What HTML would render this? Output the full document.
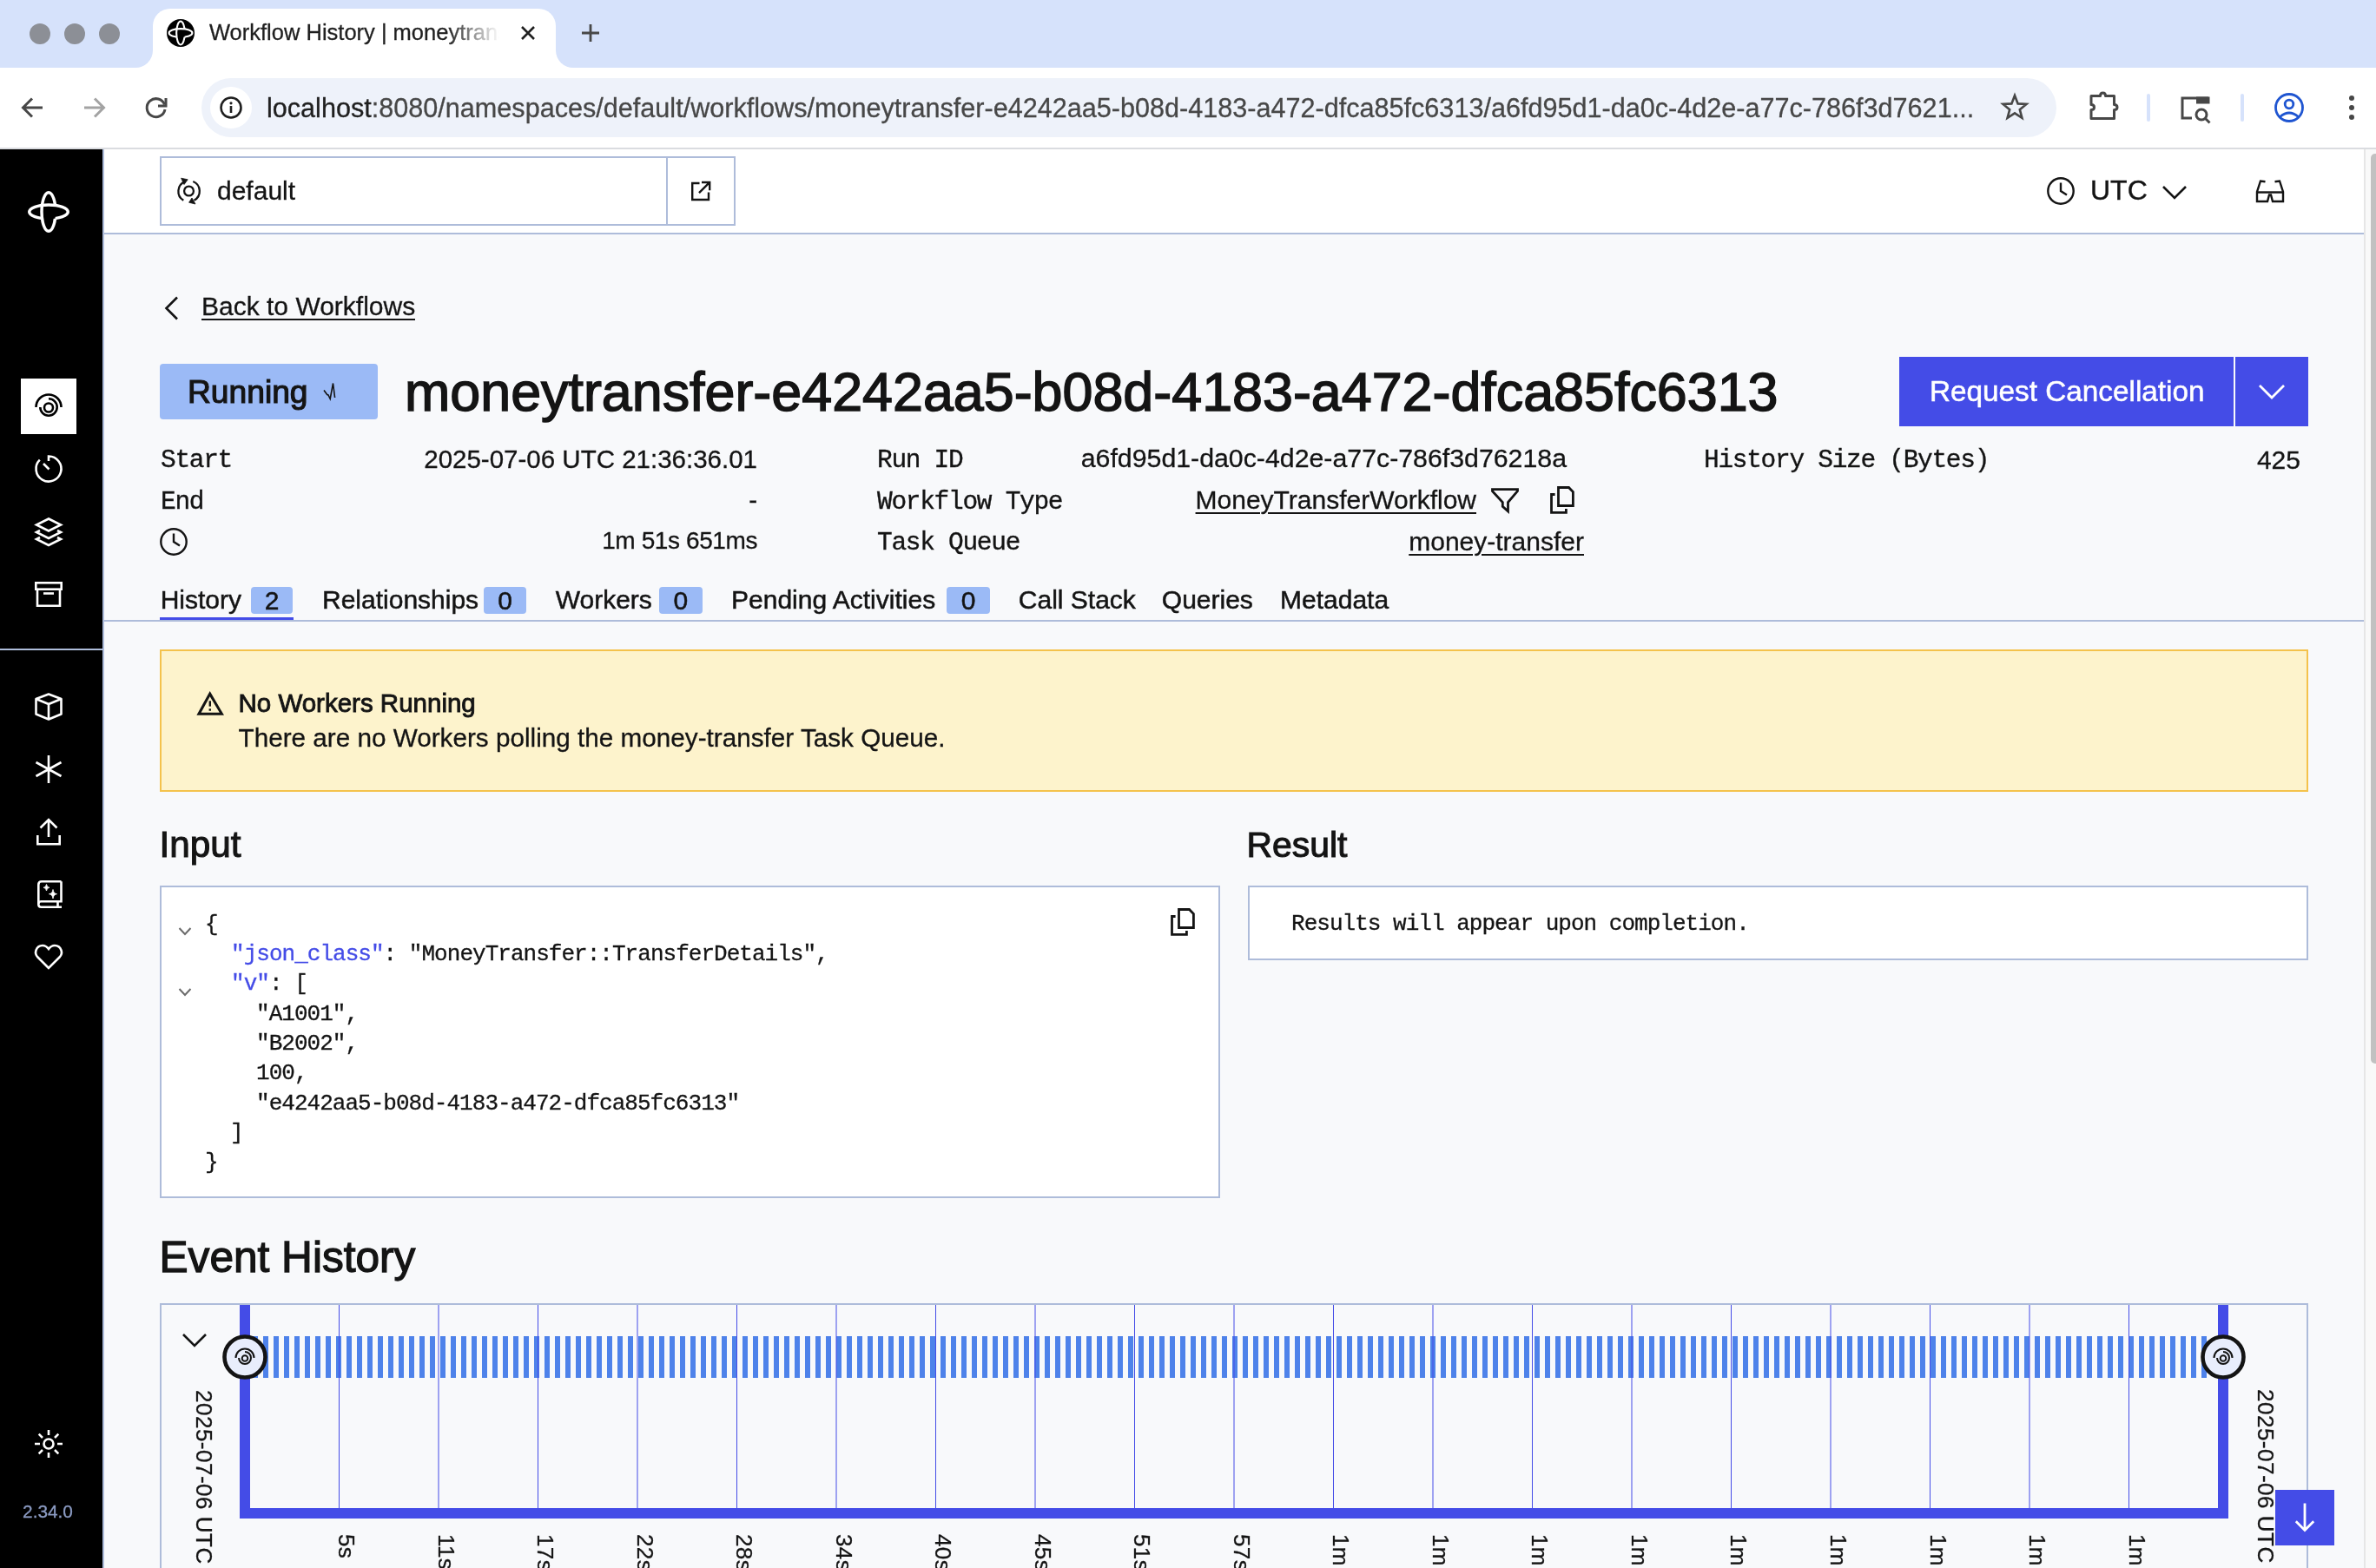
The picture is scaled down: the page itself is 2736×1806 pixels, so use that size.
<!DOCTYPE html>
<html><head><meta charset="utf-8"><title>Workflow History</title>
<style>
*{box-sizing:border-box;margin:0;padding:0}
html,body{width:2736px;height:1806px;overflow:hidden;background:#f8f9fb;font-family:"Liberation Sans",sans-serif;color:#141414}
.a{position:absolute}
svg{position:absolute;overflow:visible}
.mono{font-family:"Liberation Mono",monospace}
/* chrome */
#tabstrip{left:0;top:0;width:2736px;height:78px;background:#d6e2fb}
#toolbar{left:0;top:78px;width:2736px;height:93px;background:#fff}
#tbborder{left:0;top:170px;width:2736px;height:2px;background:#dadce0}
.tl{width:24px;height:24px;border-radius:50%;background:#8c8f96;top:27px}
#tab{left:176px;top:10px;width:464px;height:68px;background:#fff;border-radius:20px 20px 0 0}
#omni{left:232px;top:90px;width:2136px;height:68px;border-radius:34px;background:#eef2fa}
#url{left:307px;top:107px;font-size:30.6px;white-space:nowrap;color:#474747;line-height:34px}
#url b{font-weight:normal;color:#1f1f1f}
/* app */
#sidebar{left:0;top:172px;width:118px;height:1634px;background:#000}
#sbborder{left:118px;top:172px;width:2px;height:1634px;background:#aebcda}
#header{left:120px;top:172px;width:2602px;height:96px;background:#fff}
#hdrborder{left:120px;top:268px;width:2602px;height:2px;background:#aebcda}
#scroll{left:2722px;top:172px;width:14px;height:1634px;background:#f9f9f9;border-left:2px solid #e6e6e6}
#thumb{left:2730px;top:177px;width:10px;height:1048px;background:#c1c1c1;border-radius:6px}
body{will-change:transform;-webkit-text-stroke-width:0.3px}
.nb{-webkit-text-stroke-width:0}
</style></head>
<body>
<!-- ===== Browser chrome ===== -->
<div id="tabstrip" class="a"></div>
<div class="a tl" style="left:34px"></div>
<div class="a tl" style="left:74px"></div>
<div class="a tl" style="left:114px"></div>
<div class="a" style="left:156px;top:58px;width:20px;height:20px;background:#fff;overflow:hidden"><div class="a" style="left:-20px;top:-20px;width:40px;height:40px;border-radius:50%;background:#d6e2fb"></div></div>
<div class="a" style="left:640px;top:58px;width:20px;height:20px;background:#fff;overflow:hidden"><div class="a" style="left:0px;top:-20px;width:40px;height:40px;border-radius:50%;background:#d6e2fb"></div></div>
<div id="tab" class="a"></div>
<div id="toolbar" class="a"></div>
<div id="tbborder" class="a"></div>
<div id="omni" class="a"></div>

<!-- favicon -->
<svg width="0" height="0" style="left:0;top:0"><defs>
<mask id="mv" maskUnits="userSpaceOnUse" x="-5" y="-5" width="58" height="58"><rect x="-5" y="-5" width="58" height="58" fill="#fff"/><path d="M24,16 A22.25,8 0 0 1 24,32 Z" fill="#000"/></mask>
<mask id="mh" maskUnits="userSpaceOnUse" x="-5" y="-5" width="58" height="58"><rect x="-5" y="-5" width="58" height="58" fill="#fff"/><path d="M16,24 A8,22.25 0 0 0 32,24 Z" fill="#000"/></mask>
<symbol id="logo" viewBox="0 0 48 48" overflow="visible"><g fill="none" stroke="currentColor" stroke-width="3.5">
<ellipse cx="24" cy="24" rx="8" ry="22.25" mask="url(#mv)"/><ellipse cx="24" cy="24" rx="22.25" ry="8" mask="url(#mh)"/></g></symbol>
</defs></svg>
<svg style="left:192px;top:22px" width="32" height="32" viewBox="0 0 32 32"><circle cx="16" cy="16" r="16" fill="#000"/>
<use href="#logo" x="1.5" y="1.5" width="29" height="29" style="color:#fff" /></svg>
<div class="a" style="left:241px;top:22px;font-size:25.5px;line-height:30px;white-space:nowrap;color:#1f1f1f;width:334px;overflow:hidden;-webkit-mask-image:linear-gradient(90deg,#000 82%,transparent 100%)">Workflow History | moneytransfer</div>
<svg style="left:600px;top:30px" width="16" height="16" viewBox="0 0 16 16"><path d="M1 1L15 15M15 1L1 15" stroke="#1f1f1f" stroke-width="2.6"/></svg>
<svg style="left:669px;top:27px" width="22" height="22" viewBox="0 0 22 22"><path d="M11 1V21M1 11H21" stroke="#474747" stroke-width="2.8"/></svg>
<!-- nav -->
<svg style="left:24px;top:112px" width="26" height="24" viewBox="0 0 26 24"><path d="M25 12H3M13 1.5L2.5 12L13 22.5" fill="none" stroke="#474747" stroke-width="3"/></svg>
<svg style="left:96px;top:112px" width="26" height="24" viewBox="0 0 26 24"><path d="M1 12H23M13 1.5L23.5 12L13 22.5" fill="none" stroke="#a3a3a3" stroke-width="3"/></svg>
<svg style="left:167px;top:111px" width="26" height="26" viewBox="0 0 26 26"><path d="M22.5 9.5A10.5 10.5 0 1 0 23 15" fill="none" stroke="#474747" stroke-width="3"/><path d="M24 2V11H15" fill="none" stroke="#474747" stroke-width="3"/></svg>
<div class="a" style="left:242px;top:100px;width:48px;height:48px;border-radius:50%;background:#fff"></div>
<svg style="left:253px;top:111px" width="26" height="26" viewBox="0 0 26 26"><circle cx="13" cy="13" r="11.5" fill="none" stroke="#1f1f1f" stroke-width="2.6"/><rect x="11.7" y="11" width="2.6" height="8" fill="#1f1f1f"/><circle cx="13" cy="7.8" r="1.6" fill="#1f1f1f"/></svg>
<svg style="left:2304px;top:107px" width="32" height="32" viewBox="0 0 32 32"><path d="M16 3L19.6 12.4L29.5 12.9L21.8 19.2L24.4 28.8L16 23.4L7.6 28.8L10.2 19.2L2.5 12.9L12.4 12.4Z" fill="none" stroke="#474747" stroke-width="2.6" stroke-linejoin="miter"/></svg>
<svg style="left:2405px;top:105px" width="36" height="34" viewBox="0 0 36 34"><path d="M3 5.5H13.5Q13.5 2 16.5 2Q19.5 2 19.5 5.5H29.5V15.5Q33 15.5 33 18.5Q33 21.5 29.5 21.5V31.5H3V21.5Q6.5 21.5 6.5 18.5Q6.5 15.5 3 15.5Z" fill="none" stroke="#474747" stroke-width="3" stroke-linejoin="round"/></svg>
<div class="a" style="left:2472px;top:108px;width:4px;height:32px;border-radius:2px;background:#d6e2fb"></div>
<div class="a" style="left:2580px;top:108px;width:4px;height:32px;border-radius:2px;background:#d6e2fb"></div>
<svg style="left:2510px;top:110px" width="38" height="32" viewBox="0 0 38 32"><path d="M14 26H3V3H33" fill="none" stroke="#474747" stroke-width="3"/><rect x="19" y="1.5" width="15.5" height="8" fill="#474747"/><circle cx="25" cy="22" r="6" fill="none" stroke="#474747" stroke-width="3"/><path d="M29.5 26.5L34.5 31.5" stroke="#474747" stroke-width="3"/></svg>
<svg style="left:2618px;top:106px" width="36" height="36" viewBox="0 0 36 36"><circle cx="18" cy="18" r="15.5" fill="none" stroke="#1f55d1" stroke-width="2.8"/><circle cx="18" cy="14" r="4.8" fill="none" stroke="#1f55d1" stroke-width="2.8"/><path d="M7.5 28.5Q18 19.5 28.5 28.5" fill="none" stroke="#1f55d1" stroke-width="2.8"/></svg>
<svg style="left:2702px;top:108px" width="12" height="32" viewBox="0 0 12 32"><circle cx="6" cy="5" r="3" fill="#474747"/><circle cx="6" cy="16" r="3" fill="#474747"/><circle cx="6" cy="27" r="3" fill="#474747"/></svg>
<div id="url" class="a"><b>localhost</b>:8080/namespaces/default/workflows/moneytransfer-e4242aa5-b08d-4183-a472-dfca85fc6313/a6fd95d1-da0c-4d2e-a77c-786f3d7621...</div>

<!-- ===== App ===== -->
<div id="sidebar" class="a"></div>
<div id="sbborder" class="a"></div>

<!-- sidebar icons -->
<svg style="left:32px;top:220px" width="48" height="48" viewBox="0 0 48 48"><use href="#logo" x="0" y="0" width="48" height="48" style="color:#fff"/></svg>
<div class="a" style="left:24px;top:436px;width:64px;height:64px;background:#fff"></div>
<svg style="left:40px;top:453px" width="32" height="32" viewBox="0 0 32 32" fill="none" stroke="#000" stroke-width="2.6">
<path d="M1.5 16A14.5 14.5 0 0 1 30.5 16"/><path d="M16 6.3A9.7 9.7 0 1 1 6.3 16"/><circle cx="16" cy="16.5" r="5"/></svg>
<svg style="left:40px;top:524px" width="32" height="32" viewBox="0 0 32 32" fill="none" stroke="#fff" stroke-width="2.6">
<path d="M16 7V1.5A14.5 14.5 0 1 1 5.8 5.7"/><path d="M10 10L16.5 16.5"/></svg>
<svg style="left:40px;top:596px" width="32" height="32" viewBox="0 0 32 32" fill="none" stroke="#fff" stroke-width="2.6" stroke-linejoin="miter">
<path d="M16 1.5L30 8.5L16 15.5L2 8.5Z"/><path d="M6 15L2 17L16 24L30 17L26 15"/><path d="M6 23L2 25L16 32L30 25L26 23"/></svg>
<svg style="left:40px;top:668px" width="32" height="32" viewBox="0 0 32 32" fill="none" stroke="#fff" stroke-width="2.6">
<rect x="1.3" y="3.3" width="29.4" height="7.4"/><path d="M3 10.7V29.7H29V10.7"/><path d="M10 15.5H22"/></svg>
<div class="a" style="left:0;top:747px;width:118px;height:2px;background:#aebcda"></div>
<svg style="left:40px;top:798px" width="32" height="32" viewBox="0 0 32 32" fill="none" stroke="#fff" stroke-width="2.6" stroke-linejoin="round">
<path d="M16 1.5L30.5 7V24.5L16 30.5L1.5 24.5V7Z"/><path d="M1.5 7L16 13L30.5 7M16 13V30.5"/></svg>
<svg style="left:40px;top:870px" width="32" height="32" viewBox="0 0 32 32" fill="none" stroke="#fff" stroke-width="2.6">
<path d="M16 0V32M1.5 8L30.5 24M1.5 24L30.5 8"/></svg>
<svg style="left:40px;top:942px" width="32" height="32" viewBox="0 0 32 32" fill="none" stroke="#fff" stroke-width="2.6">
<path d="M16 22V2M6.5 11.5L16 2L25.5 11.5"/><path d="M3.3 20V30.3H28.7V20"/></svg>
<svg style="left:40px;top:1014px" width="32" height="32" viewBox="0 0 32 32" fill="none" stroke="#fff" stroke-width="2.6">
<path d="M30.5 1.3H8Q4.3 1.3 4.3 5V27.5Q4.3 30.7 7.5 30.7H31"/><path d="M4.3 27Q4.3 24.3 7.5 24.3H30.5V1.3M26.5 24.3V30.7"/>
<path d="M13.5 4.5Q14 8 17 8.3Q14 8.6 13.5 12Q13 8.6 10 8.3Q13 8 13.5 4.5Z" fill="#fff" stroke-width="0.8"/>
<path d="M21 10.5Q21.6 15.2 25.5 15.7Q21.6 16.2 21 21Q20.4 16.2 16.5 15.7Q20.4 15.2 21 10.5Z" fill="#fff" stroke-width="0.8"/></svg>
<svg style="left:40px;top:1086px" width="32" height="32" viewBox="0 0 32 32" fill="none" stroke="#fff" stroke-width="2.6" stroke-linejoin="miter">
<path d="M16 29L3.5 16.5Q0 13 1.5 8.5Q3.5 3 9 3Q13 3 16 7Q19 3 23 3Q28.5 3 30.5 8.5Q32 13 28.5 16.5Z"/></svg>
<svg style="left:40px;top:1647px" width="32" height="32" viewBox="0 0 32 32" fill="none" stroke="#fff" stroke-width="2.6">
<circle cx="16" cy="16" r="5.5"/><path d="M16 0V6M16 26V32M0 16H6M26 16H32M4.7 4.7L9 9M23 23L27.3 27.3M4.7 27.3L9 23M23 9L27.3 4.7"/></svg>
<div class="a" style="left:-4px;top:1728.5px;width:118px;text-align:center;font-size:20.8px;line-height:24px;color:#8b9bc3">2.34.0</div>
<div id="header" class="a"></div>
<div id="hdrborder" class="a"></div>

<!-- header -->
<div class="a" style="left:184px;top:180px;width:663px;height:80px;border:2px solid #aebcda;background:#fff"></div>
<div class="a" style="left:767px;top:180px;width:2px;height:80px;background:#aebcda"></div>
<svg style="left:200px;top:202px" width="36" height="36" viewBox="0 0 36 36" fill="none" stroke="#141414" stroke-width="2.3">
<circle cx="17.5" cy="18" r="5.4"/><path d="M13.2 7.2A12 12 0 0 0 11.3 28.8"/><path d="M22.3 7A12 12 0 0 1 23.5 28.7"/>
<path d="M8.6 3.2L16.2 4.8L12 10.5Z" fill="#141414" stroke-width="0.8" stroke-linejoin="round"/><path d="M17.6 31.2L25 33L21 26Z" fill="#141414" stroke-width="0.8" stroke-linejoin="round"/></svg>
<div class="a" style="left:250px;top:205px;font-size:30px;line-height:1;white-space:nowrap;-webkit-text-stroke:0.3px #141414">default</div>
<svg style="left:795px;top:208px" width="24" height="24" viewBox="0 0 24 24" fill="none" stroke="#141414" stroke-width="2.4">
<path d="M10.5 3H2.2V22H21V13.5"/><path d="M13 2H22.2V11.2M22 2.2L10 14.2"/></svg>
<svg style="left:2356px;top:203px" width="34" height="34" viewBox="0 0 34 34" fill="none" stroke="#141414" stroke-width="2.4">
<circle cx="17" cy="17" r="14.7"/><path d="M17 7.5V17L24 21.5"/></svg>
<div class="a" style="left:2407px;top:202.5px;font-size:32px;line-height:1;white-space:nowrap;-webkit-text-stroke:0.4px #141414">UTC</div>
<svg style="left:2489px;top:213px" width="30" height="18" viewBox="0 0 30 18" fill="none" stroke="#141414" stroke-width="2.6">
<path d="M2 2L15 15L28 2"/></svg>
<svg style="left:2597px;top:207px" width="34" height="28" viewBox="0 0 34 28" fill="none" stroke="#141414" stroke-width="2.4">
<path d="M11.5 2.3L6 1.5L2 14V25H14L16 17.5H18L20 25H32V14L28 1.5L22.5 2.3"/><path d="M2 14.5H32"/></svg>

<!-- ===== main content ===== -->
<svg style="left:188px;top:341px" width="20" height="28" viewBox="0 0 20 28" fill="none" stroke="#141414" stroke-width="2.6"><path d="M16 1.5L3.5 14L16 26.5"/></svg>
<div class="a" style="left:232px;top:337.5px;font-size:30px;line-height:1;white-space:nowrap">Back to Workflows</div>
<div class="a" style="left:232px;top:367px;width:246px;height:2px;background:#141414"></div>

<div class="a" style="left:184px;top:419px;width:251px;height:64px;background:#9bbaf6;border-radius:4px"></div>
<div class="a" style="left:216px;top:433.4px;font-size:37.2px;line-height:1;white-space:nowrap;color:#141414;-webkit-text-stroke:1.2px #141414">Running</div>
<svg style="left:368px;top:436px" width="24" height="30" viewBox="0 0 24 30" fill="none" stroke="#141414" stroke-width="1.6" stroke-linejoin="miter"><path d="M5 13.5L8.7 18.5L10 19L12.2 23.5L15.5 5.5L17.6 22"/></svg>

<div class="a" style="left:466px;top:420.0px;font-size:62.8px;line-height:1;white-space:nowrap;color:#141414;-webkit-text-stroke:1.5px #141414">moneytransfer-e4242aa5-b08d-4183-a472-dfca85fc6313</div>

<div class="a" style="left:2187px;top:411px;width:385px;height:80px;background:#444ce7"></div>
<div class="a" style="left:2574px;top:411px;width:84px;height:80px;background:#444ce7"></div>
<div class="a" style="left:2222px;top:433.9px;font-size:33.3px;line-height:1;white-space:nowrap;color:#fff;-webkit-text-stroke:0.5px #fff">Request Cancellation</div>
<svg style="left:2600px;top:441px" width="32" height="22" viewBox="0 0 32 22" fill="none" stroke="#fff" stroke-width="2.8"><path d="M2 3L16 17L30 3"/></svg>

<!-- details -->
<div class="a mono" style="left:185px;top:516.3px;font-size:29.5px;letter-spacing:-1.3px;-webkit-text-stroke:0.35px #141414;line-height:1;white-space:nowrap">Start</div>
<div class="a mono" style="left:185px;top:564.1px;font-size:29.5px;letter-spacing:-1.3px;-webkit-text-stroke:0.35px #141414;line-height:1;white-space:nowrap">End</div>
<svg style="left:183px;top:607px" width="34" height="34" viewBox="0 0 34 34" fill="none" stroke="#141414" stroke-width="2.4"><circle cx="17" cy="17" r="14.7"/><path d="M17 7.5V17L24 21.5"/></svg>
<div class="a" style="left:372px;width:500px;text-align:right;top:513.6px;font-size:29.5px;line-height:1;white-space:nowrap">2025-07-06 UTC 21:36:36.01</div>
<div class="a" style="left:372px;width:500px;text-align:right;top:561.4px;font-size:29.5px;line-height:1;white-space:nowrap">-</div>
<div class="a" style="left:372px;width:500px;text-align:right;top:609.2px;font-size:28px;line-height:1;white-space:nowrap;letter-spacing:-0.4px">1m 51s 651ms</div>

<div class="a mono" style="left:1010px;top:516.3px;font-size:29.5px;letter-spacing:-1.3px;-webkit-text-stroke:0.35px #141414;line-height:1;white-space:nowrap">Run ID</div>
<div class="a mono" style="left:1010px;top:564.1px;font-size:29.5px;letter-spacing:-1.3px;-webkit-text-stroke:0.35px #141414;line-height:1;white-space:nowrap">Workflow Type</div>
<div class="a mono" style="left:1010px;top:610.6px;font-size:29.5px;letter-spacing:-1.3px;-webkit-text-stroke:0.35px #141414;line-height:1;white-space:nowrap">Task Queue</div>
<div class="a" style="left:1204px;width:600px;text-align:right;top:513.2px;font-size:30.3px;line-height:1;white-space:nowrap">a6fd95d1-da0c-4d2e-a77c-786f3d76218a</div>
<div class="a" style="left:1100px;width:600px;text-align:right;top:561.0px;font-size:30px;line-height:1;white-space:nowrap"><span style="text-decoration:underline;text-decoration-thickness:2px;text-underline-offset:4px">MoneyTransferWorkflow</span></div>
<svg style="left:1705px;top:550px" width="50" height="50" viewBox="0 0 50 50" fill="none" stroke="#141414" stroke-width="2.8" stroke-linejoin="miter"><path d="M13.5 13.6H42.5V15.6L31.5 28.6V38.8L25.3 33.4V28.6L13.5 15.6Z"/></svg>
<svg style="left:1785px;top:560px" width="30" height="34" viewBox="0 0 30 34" fill="none" stroke="#141414" stroke-width="2.8" stroke-linejoin="miter"><path d="M5.6 9.5H1.5V30.3H18.4V26.1"/><path d="M9.5 1.5H21.5L26.4 6.5V22.5H9.5Z"/></svg>
<div class="a" style="left:1224px;width:600px;text-align:right;top:608.5px;font-size:30px;line-height:1;white-space:nowrap"><span style="text-decoration:underline;text-decoration-thickness:2px;text-underline-offset:4px">money-transfer</span></div>

<div class="a mono" style="left:1962px;top:516.1px;font-size:29.5px;letter-spacing:-1.3px;-webkit-text-stroke:0.35px #141414;line-height:1;white-space:nowrap">History Size (Bytes)</div>
<div class="a" style="left:2249px;width:400px;text-align:right;top:514.5px;font-size:30px;line-height:1;white-space:nowrap">425</div>

<!-- tabs -->
<div class="a" style="left:120px;top:714px;width:2602px;height:2px;background:#aebcda"></div>
<div class="a" style="left:184px;top:711px;width:154px;height:3px;background:#444ce7"></div>
<div class="a" style="left:184.7px;top:675.9px;font-size:30px;line-height:1;white-space:nowrap;-webkit-text-stroke:0.5px #141414">History</div>
<div class="a" style="left:289px;top:676px;width:48.4px;height:31px;background:#9bbaf6;border-radius:4px;text-align:center;font-size:30px;line-height:31px;font-weight:normal;-webkit-text-stroke:0.5px #141414">2</div>
<div class="a" style="left:371px;top:675.9px;font-size:30px;line-height:1;white-space:nowrap;-webkit-text-stroke:0.5px #141414">Relationships</div>
<div class="a" style="left:557px;top:676px;width:49.4px;height:31px;background:#9bbaf6;border-radius:4px;text-align:center;font-size:30px;line-height:31px;font-weight:normal;-webkit-text-stroke:0.5px #141414">0</div>
<div class="a" style="left:639.7px;top:675.9px;font-size:30px;line-height:1;white-space:nowrap;-webkit-text-stroke:0.5px #141414">Workers</div>
<div class="a" style="left:759px;top:676px;width:49.6px;height:31px;background:#9bbaf6;border-radius:4px;text-align:center;font-size:30px;line-height:31px;font-weight:normal;-webkit-text-stroke:0.5px #141414">0</div>
<div class="a" style="left:842px;top:675.9px;font-size:30px;line-height:1;white-space:nowrap;-webkit-text-stroke:0.5px #141414">Pending Activities</div>
<div class="a" style="left:1090.4px;top:676px;width:49.6px;height:31px;background:#9bbaf6;border-radius:4px;text-align:center;font-size:30px;line-height:31px;font-weight:normal;-webkit-text-stroke:0.5px #141414">0</div>
<div class="a" style="left:1172.8px;top:675.9px;font-size:30px;line-height:1;white-space:nowrap;-webkit-text-stroke:0.5px #141414">Call Stack</div>
<div class="a" style="left:1337.8px;top:675.9px;font-size:30px;line-height:1;white-space:nowrap;-webkit-text-stroke:0.5px #141414">Queries</div>
<div class="a" style="left:1474px;top:675.9px;font-size:30px;line-height:1;white-space:nowrap;-webkit-text-stroke:0.5px #141414">Metadata</div>

<!-- alert -->
<div class="a" style="left:184px;top:748px;width:2474px;height:164px;background:#fdf3cc;border:2px solid #f4c24c"></div>
<svg style="left:220px;top:790px" width="45" height="40" viewBox="0 0 45 40"><path fill="#141414" fill-rule="evenodd" d="M21.7 6.1L38 33.8H6.4ZM21.7 12.2L11.6 30.8H32.8Z"/><rect x="20.6" y="17.3" width="2.4" height="6.3" fill="#141414"/><rect x="20.6" y="26.3" width="2.4" height="2.4" fill="#141414"/></svg>
<div class="a" style="left:274.5px;top:795.4px;font-size:29.5px;line-height:1;white-space:nowrap;color:#141414;-webkit-text-stroke:0.9px #141414">No Workers Running</div>
<div class="a" style="left:274.5px;top:835.3px;font-size:29.7px;line-height:1;white-space:nowrap">There are no Workers polling the money-transfer Task Queue.</div>

<!-- input / result -->
<div class="a" style="left:183.5px;top:951.6px;font-size:42.3px;line-height:1;white-space:nowrap;color:#141414;-webkit-text-stroke:1.1px #141414">Input</div>
<div class="a" style="left:1435.5px;top:953.2px;font-size:40.9px;line-height:1;white-space:nowrap;color:#141414;-webkit-text-stroke:1.1px #141414">Result</div>
<div class="a" style="left:184px;top:1020px;width:1221px;height:360px;background:#fff;border:2px solid #aebcda"></div>
<div class="a" style="left:1437px;top:1020px;width:1221px;height:86px;background:#fff;border:2px solid #aebcda"></div>
<svg style="left:1348px;top:1046px" width="30" height="34" viewBox="0 0 30 34" fill="none" stroke="#141414" stroke-width="2.8" stroke-linejoin="miter"><path d="M5.6 9.5H1.5V30.3H18.4V26.1"/><path d="M9.5 1.5H21.5L26.4 6.5V22.5H9.5Z"/></svg>
<div class="a mono" style="left:1487px;top:1050.5px;font-size:26px;letter-spacing:-0.97px;-webkit-text-stroke:0.3px currentColor;line-height:1;white-space:nowrap">Results will appear upon completion.</div>
<div class="a mono" style="left:236px;top:1051.7px;font-size:26px;letter-spacing:-0.97px;-webkit-text-stroke:0.3px currentColor;line-height:1;white-space:pre">{</div>
<div class="a mono" style="left:266px;top:1086.0px;font-size:26px;letter-spacing:-0.97px;-webkit-text-stroke:0.3px currentColor;line-height:1;white-space:pre"><span style="color:#444ce7">"json_class"</span>: "MoneyTransfer::TransferDetails",</div>
<div class="a mono" style="left:266px;top:1120.3px;font-size:26px;letter-spacing:-0.97px;-webkit-text-stroke:0.3px currentColor;line-height:1;white-space:pre"><span style="color:#444ce7">"v"</span>: [</div>
<div class="a mono" style="left:295px;top:1154.6px;font-size:26px;letter-spacing:-0.97px;-webkit-text-stroke:0.3px currentColor;line-height:1;white-space:pre">"A1001",</div>
<div class="a mono" style="left:295px;top:1188.9px;font-size:26px;letter-spacing:-0.97px;-webkit-text-stroke:0.3px currentColor;line-height:1;white-space:pre">"B2002",</div>
<div class="a mono" style="left:295px;top:1223.2px;font-size:26px;letter-spacing:-0.97px;-webkit-text-stroke:0.3px currentColor;line-height:1;white-space:pre">100,</div>
<div class="a mono" style="left:295px;top:1257.5px;font-size:26px;letter-spacing:-0.97px;-webkit-text-stroke:0.3px currentColor;line-height:1;white-space:pre">"e4242aa5-b08d-4183-a472-dfca85fc6313"</div>
<div class="a mono" style="left:265px;top:1291.8px;font-size:26px;letter-spacing:-0.97px;-webkit-text-stroke:0.3px currentColor;line-height:1;white-space:pre">]</div>
<div class="a mono" style="left:236px;top:1326.1px;font-size:26px;letter-spacing:-0.97px;-webkit-text-stroke:0.3px currentColor;line-height:1;white-space:pre">}</div>
<svg style="left:205px;top:1067px" width="16" height="12" viewBox="0 0 16 12" fill="none" stroke="#6b6b6b" stroke-width="2"><path d="M1.5 2L8 9L14.5 2"/></svg>
<svg style="left:205px;top:1137px" width="16" height="12" viewBox="0 0 16 12" fill="none" stroke="#6b6b6b" stroke-width="2"><path d="M1.5 2L8 9L14.5 2"/></svg>

<div class="a" style="left:183.5px;top:1423.8px;font-size:49.6px;line-height:1;white-space:nowrap;color:#141414;-webkit-text-stroke:1.3px #141414">Event History</div>
<div class="a" style="left:184px;top:1501px;width:2474px;height:400px;border:2px solid #aebcda"></div>
<svg style="left:209px;top:1535px" width="30" height="20" viewBox="0 0 30 20" fill="none" stroke="#141414" stroke-width="2.6"><path d="M2 2L15 15L28 2"/></svg>
<div class="a" style="left:291px;top:1539px;width:2250px;height:48px;background:repeating-linear-gradient(90deg,#4e82ea 0 6px,transparent 6px 12px)"></div>
<svg style="left:276px;top:1503px" width="2290" height="234" viewBox="0 0 2290 234" shape-rendering="geometricPrecision"><rect x="114.0" y="0" width="1" height="234" fill="#444ce7"/><rect x="228.5" y="0" width="1" height="234" fill="#444ce7"/><rect x="343.0" y="0" width="1" height="234" fill="#444ce7"/><rect x="457.5" y="0" width="1" height="234" fill="#444ce7"/><rect x="572.0" y="0" width="1" height="234" fill="#444ce7"/><rect x="686.5" y="0" width="1" height="234" fill="#444ce7"/><rect x="801.0" y="0" width="1" height="234" fill="#444ce7"/><rect x="915.5" y="0" width="1" height="234" fill="#444ce7"/><rect x="1030.0" y="0" width="1" height="234" fill="#444ce7"/><rect x="1144.5" y="0" width="1" height="234" fill="#444ce7"/><rect x="1259.0" y="0" width="1" height="234" fill="#444ce7"/><rect x="1373.5" y="0" width="1" height="234" fill="#444ce7"/><rect x="1488.0" y="0" width="1" height="234" fill="#444ce7"/><rect x="1602.5" y="0" width="1" height="234" fill="#444ce7"/><rect x="1717.0" y="0" width="1" height="234" fill="#444ce7"/><rect x="1831.5" y="0" width="1" height="234" fill="#444ce7"/><rect x="1946.0" y="0" width="1" height="234" fill="#444ce7"/><rect x="2060.5" y="0" width="1" height="234" fill="#444ce7"/><rect x="2175.0" y="0" width="1" height="234" fill="#444ce7"/></svg>
<div class="a" style="left:276px;top:1503px;width:12px;height:246px;background:#444ce7"></div>
<div class="a" style="left:276px;top:1737px;width:2290px;height:12px;background:#444ce7"></div>
<div class="a" style="left:2554px;top:1503px;width:12px;height:246px;background:#444ce7"></div>
<svg style="left:255px;top:1536px" width="54" height="54" viewBox="0 0 54 54"><circle cx="27" cy="27" r="23.5" fill="#e8edfc" stroke="#141414" stroke-width="4.6"/>
<g fill="none" stroke="#141414" stroke-width="2"><path d="M16.5 28A10.5 10.5 0 0 1 37.5 28"/><path d="M27 21A7 7 0 1 1 20 28"/><circle cx="27" cy="28.5" r="3.3"/></g></svg>
<svg style="left:2533px;top:1536px" width="54" height="54" viewBox="0 0 54 54"><circle cx="27" cy="27" r="23.5" fill="#e8edfc" stroke="#141414" stroke-width="4.6"/>
<g fill="none" stroke="#141414" stroke-width="2"><path d="M16.5 28A10.5 10.5 0 0 1 37.5 28"/><path d="M27 21A7 7 0 1 1 20 28"/><circle cx="27" cy="28.5" r="3.3"/></g></svg>
<div class="a" style="left:386.3px;top:1767px;writing-mode:vertical-rl;font-size:26px;line-height:26px;white-space:nowrap;letter-spacing:0.4px">5s</div>
<div class="a" style="left:500.8px;top:1767px;writing-mode:vertical-rl;font-size:26px;line-height:26px;white-space:nowrap;letter-spacing:0.4px">11s</div>
<div class="a" style="left:615.3px;top:1767px;writing-mode:vertical-rl;font-size:26px;line-height:26px;white-space:nowrap;letter-spacing:0.4px">17s</div>
<div class="a" style="left:729.8px;top:1767px;writing-mode:vertical-rl;font-size:26px;line-height:26px;white-space:nowrap;letter-spacing:0.4px">22s</div>
<div class="a" style="left:844.3px;top:1767px;writing-mode:vertical-rl;font-size:26px;line-height:26px;white-space:nowrap;letter-spacing:0.4px">28s</div>
<div class="a" style="left:958.9px;top:1767px;writing-mode:vertical-rl;font-size:26px;line-height:26px;white-space:nowrap;letter-spacing:0.4px">34s</div>
<div class="a" style="left:1073.4px;top:1767px;writing-mode:vertical-rl;font-size:26px;line-height:26px;white-space:nowrap;letter-spacing:0.4px">40s</div>
<div class="a" style="left:1187.9px;top:1767px;writing-mode:vertical-rl;font-size:26px;line-height:26px;white-space:nowrap;letter-spacing:0.4px">45s</div>
<div class="a" style="left:1302.4px;top:1767px;writing-mode:vertical-rl;font-size:26px;line-height:26px;white-space:nowrap;letter-spacing:0.4px">51s</div>
<div class="a" style="left:1416.9px;top:1767px;writing-mode:vertical-rl;font-size:26px;line-height:26px;white-space:nowrap;letter-spacing:0.4px">57s</div>
<div class="a" style="left:1531.4px;top:1767px;writing-mode:vertical-rl;font-size:26px;line-height:26px;white-space:nowrap;letter-spacing:0.4px">1m 3s</div>
<div class="a" style="left:1645.9px;top:1767px;writing-mode:vertical-rl;font-size:26px;line-height:26px;white-space:nowrap;letter-spacing:0.4px">1m 8s</div>
<div class="a" style="left:1760.4px;top:1767px;writing-mode:vertical-rl;font-size:26px;line-height:26px;white-space:nowrap;letter-spacing:0.4px">1m 14s</div>
<div class="a" style="left:1874.9px;top:1767px;writing-mode:vertical-rl;font-size:26px;line-height:26px;white-space:nowrap;letter-spacing:0.4px">1m 20s</div>
<div class="a" style="left:1989.4px;top:1767px;writing-mode:vertical-rl;font-size:26px;line-height:26px;white-space:nowrap;letter-spacing:0.4px">1m 25s</div>
<div class="a" style="left:2104.0px;top:1767px;writing-mode:vertical-rl;font-size:26px;line-height:26px;white-space:nowrap;letter-spacing:0.4px">1m 31s</div>
<div class="a" style="left:2218.5px;top:1767px;writing-mode:vertical-rl;font-size:26px;line-height:26px;white-space:nowrap;letter-spacing:0.4px">1m 37s</div>
<div class="a" style="left:2333.0px;top:1767px;writing-mode:vertical-rl;font-size:26px;line-height:26px;white-space:nowrap;letter-spacing:0.4px">1m 42s</div>
<div class="a" style="left:2447.5px;top:1767px;writing-mode:vertical-rl;font-size:26px;line-height:26px;white-space:nowrap;letter-spacing:0.4px">1m 48s</div>
<div class="a" style="left:221.5px;top:1601px;writing-mode:vertical-rl;font-size:26px;line-height:26px;white-space:nowrap;letter-spacing:0.5px">2025-07-06 UTC 21:36:36.01</div>
<div class="a" style="left:2595.5px;top:1600px;writing-mode:vertical-rl;font-size:26px;line-height:26px;white-space:nowrap;letter-spacing:0.5px">2025-07-06 UTC 21:38:27.66</div>
<div class="a" style="left:2620px;top:1716px;width:68px;height:64px;background:#444ce7"></div>
<svg style="left:2636px;top:1729px" width="36" height="38" viewBox="0 0 36 38" fill="none" stroke="#fff" stroke-width="2.8"><path d="M18 2.5V33.5M7.8 23.3L18 33.5L28.2 23.3"/></svg>
<div id="scroll" class="a"></div>
<div id="thumb" class="a"></div>
</body></html>
